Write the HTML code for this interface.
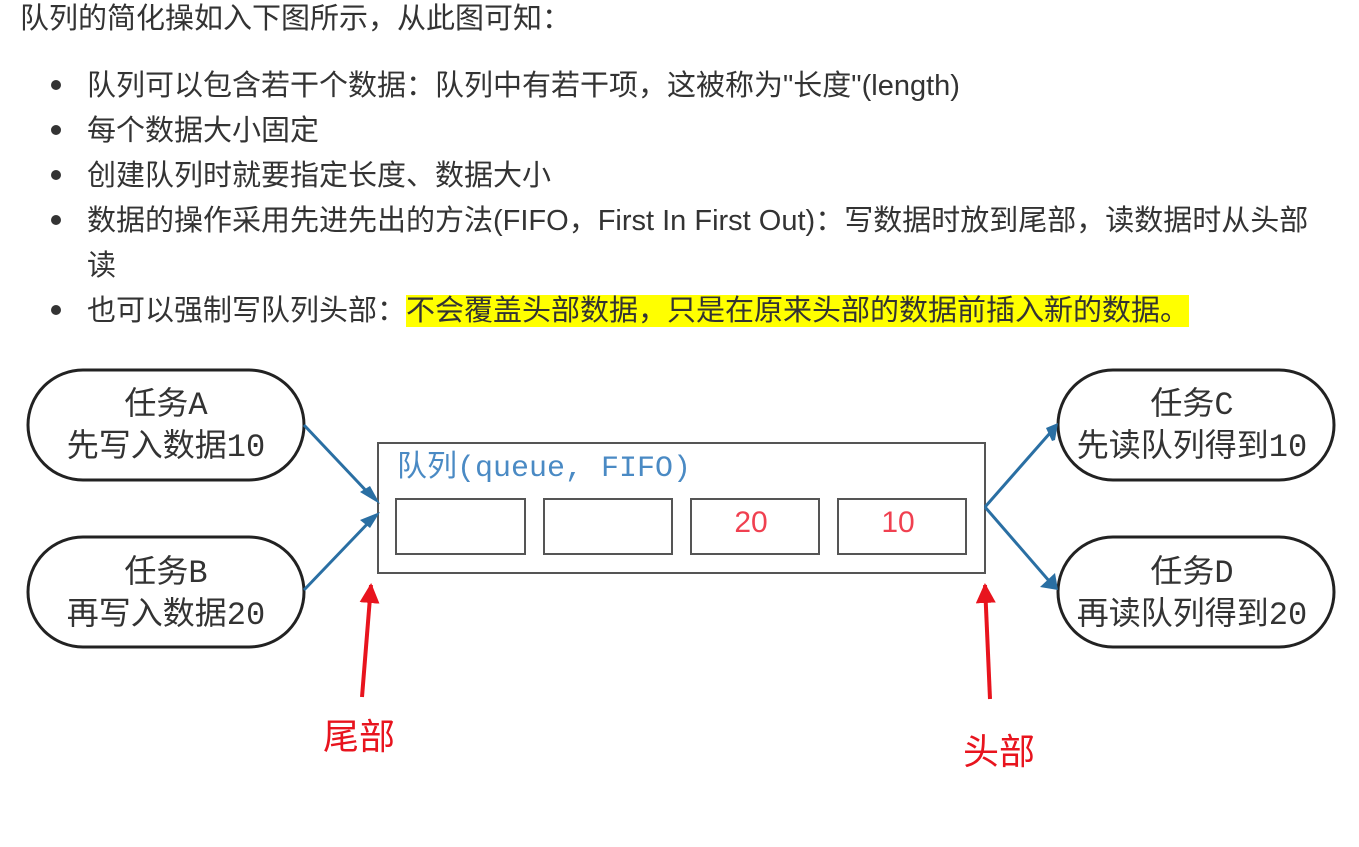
<!DOCTYPE html>
<html><head><meta charset="utf-8"><style>
body{margin:0;width:1359px;height:847px;background:#fff;position:relative;overflow:hidden;font-family:"Liberation Sans","Noto Sans CJK SC",sans-serif;color:#333;}
.t{position:absolute;font-size:29px;line-height:45px;white-space:nowrap;}
.b{position:absolute;left:51px;width:10px;height:10px;border-radius:50%;background:#333;}
.hl{background:#ffff00;}
</style></head><body>
<div class="t" style="left:20px;top:-3px">队列的简化操如入下图所示，从此图可知：</div>
<div class="b" style="top:80px"></div><div class="t" style="left:87px;top:64px">队列可以包含若干个数据：队列中有若干项，这被称为"长度"(length)</div>
<div class="b" style="top:125px"></div><div class="t" style="left:87px;top:109px">每个数据大小固定</div>
<div class="b" style="top:170px"></div><div class="t" style="left:87px;top:154px">创建队列时就要指定长度、数据大小</div>
<div class="b" style="top:215px"></div><div class="t" style="left:87px;top:199px">数据的操作采用先进先出的方法(FIFO，First In First Out)：写数据时放到尾部，读数据时从头部</div>
<div class="t" style="left:87px;top:244px">读</div>
<div class="b" style="top:305px"></div><div class="t" style="left:87px;top:289px">也可以强制写队列头部：<span class="hl">不会覆盖头部数据，只是在原来头部的数据前插入新的数据。</span></div>
<svg style="position:absolute;left:0;top:0" width="1359" height="847">
<defs><marker id="ar" viewBox="0 0 10 10" refX="9" refY="5" markerWidth="5" markerHeight="5" orient="auto"><path d="M0,0 L10,5 L0,10z" fill="#e8141e"/></marker></defs>
<g fill="none" stroke="#222" stroke-width="3">
<rect x="28" y="370" width="276" height="110" rx="55"/>
<rect x="28" y="537" width="276" height="110" rx="55"/>
<rect x="1058" y="370" width="276" height="110" rx="55"/>
<rect x="1058" y="537" width="276" height="110" rx="55"/>
</g>
<g fill="none" stroke="#555" stroke-width="2">
<rect x="378" y="443" width="607" height="130"/>
<rect x="396" y="499" width="129" height="55"/>
<rect x="544" y="499" width="128" height="55"/>
<rect x="691" y="499" width="128" height="55"/>
<rect x="838" y="499" width="128" height="55"/>
</g>
<g stroke="#2a6fa3" stroke-width="3">
<line x1="304" y1="425" x2="372" y2="497"/>
<line x1="304" y1="590" x2="372" y2="519"/>
<line x1="985" y1="507" x2="1050" y2="433"/>
<line x1="985" y1="507" x2="1050" y2="582"/>
</g>
<g fill="#2a6fa3">
<path d="M380,504 L360,492 L370,486z"/>
<path d="M380,512 L370,528 L360,520z"/>
<path d="M1058,423 L1046,428 L1052,441 L1055,440z"/>
<path d="M1058,590 L1040,587 L1055,573z"/>
</g>
<g stroke="#e8141e" stroke-width="4" marker-end="url(#ar)">
<line x1="362" y1="697" x2="371" y2="585"/>
<line x1="990" y1="699" x2="985" y2="585"/>
</g>
<g font-family="Liberation Mono,Noto Sans CJK SC,monospace" font-size="32" fill="#333" text-anchor="middle">
<text x="166" y="414">任务A</text><text x="166" y="456">先写入数据10</text>
<text x="166" y="582">任务B</text><text x="166" y="624">再写入数据20</text>
<text x="1192" y="414">任务C</text><text x="1192" y="456">先读队列得到10</text>
<text x="1192" y="582">任务D</text><text x="1192" y="624">再读队列得到20</text>
</g>
<text x="397" y="476" font-family="Liberation Mono,Noto Sans CJK SC,monospace" font-size="30" fill="#4a8ac4">队列(queue, FIFO)</text>
<g font-family="Liberation Sans,sans-serif" font-size="30" fill="#f04050" text-anchor="middle">
<text x="751" y="532">20</text><text x="898" y="532">10</text></g>
<g font-family="Liberation Sans,Noto Sans CJK SC,sans-serif" font-size="36" fill="#e8141e">
<text x="323" y="749">尾部</text><text x="963" y="764">头部</text></g>
</svg>
</body></html>
